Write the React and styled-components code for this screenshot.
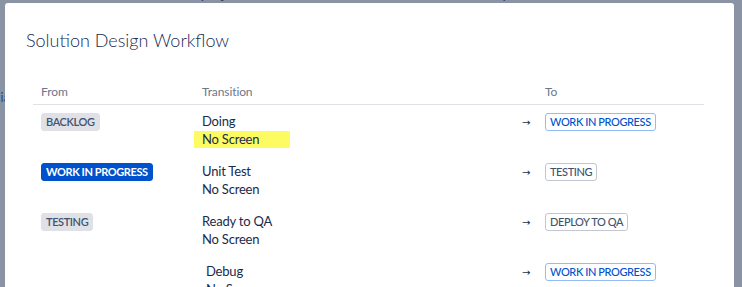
import React from "react";
import styled, { createGlobalStyle } from "styled-components";

const GlobalStyle = createGlobalStyle`
  body {
    margin: 0;
    background: #8993a4;
    font-family: Lato, "Open Sans", sans-serif;
    overflow: hidden;
  }
`;

const Backdrop = styled.div`
  position: relative;
  height: 287px;
  overflow: hidden;
`;

const BehindLine = styled.div`
  margin-top: ${({ top }) => top}px;
  margin-left: ${({ left }) => left || 0}px;
  font-size: 14px;
  line-height: 18px;
  white-space: nowrap;
  color: ${({ color }) => color || "#2c3a52"};
`;

const Modal = styled.div`
  position: absolute;
  top: 3px;
  left: 5px;
  width: 729px;
  height: 320px;
  box-sizing: border-box;
  background: #fff;
  border-radius: 3px;
  padding: 23px 30px 0 21px;
`;

const Title = styled.h2`
  margin: 0 0 30px;
  font-size: 18px;
  line-height: 28px;
  font-weight: 300;
  color: #172b4d;
`;

const Table = styled.div`
  margin-left: 7px;
  color: #172b4d;
`;

const Row = styled.div`
  display: grid;
  grid-template-columns: 161px 320px 23px 1fr;
  align-items: start;
  padding: ${({ head }) => (head ? "0 0 4px" : "7px 0")};
  border-bottom: ${({ head }) => (head ? "1px solid #dfe1e6" : "none")};
`;

const HeadCell = styled.div`
  padding: 0 8px;
  font-size: 12px;
  line-height: 16px;
  letter-spacing: -0.1px;
  color: #6b778c;
`;

const Cell = styled.div`
  padding: 0 8px;
  padding-left: ${({ indent }) => 8 + (indent || 0)}px;
  font-size: 13px;
  letter-spacing: -0.2px;
  line-height: 18px;
  color: #172b4d;
`;

const ArrowCell = styled.div`
  padding: 2px 0 0 8px;
  font-family: "DejaVu Sans", sans-serif;
  font-size: 10px;
  line-height: 18px;
  color: #172b4d;
`;

const Mark = styled.span`
  display: inline-block;
  width: 96px;
  box-sizing: border-box;
  margin-left: -8px;
  padding-left: 8px;
  background: #fcfc62;
  line-height: 17px;
  margin-top: 1px;
`;

const palettes = {
  subtle: { bg: "#dfe1e6", fg: "#42526e", border: "#dfe1e6", weight: 600 },
  bold: { bg: "#0052cc", fg: "#fff", border: "#0052cc", weight: 700 },
  outlineBlue: { bg: "#fff", fg: "#0052cc", border: "#94bbf7", weight: 500 },
  outlineGray: { bg: "#fff", fg: "#42526e", border: "#c1c7d0", weight: 500 },
};

const Lozenge = styled.span`
  display: inline-block;
  box-sizing: border-box;
  height: 18px;
  padding: 0 4px;
  border-radius: 3px;
  border: 1px solid ${({ kind }) => palettes[kind].border};
  background: ${({ kind }) => palettes[kind].bg};
  color: ${({ kind }) => palettes[kind].fg};
  font-weight: ${({ kind }) => palettes[kind].weight};
  font-size: 11px;
  letter-spacing: -0.4px;
  line-height: 16px;
  text-transform: uppercase;
  white-space: nowrap;
`;

const transitions = [
  { from: "BACKLOG", fromKind: "subtle", name: "Doing", highlight: true, to: "WORK IN PROGRESS", toKind: "outlineBlue" },
  { from: "WORK IN PROGRESS", fromKind: "bold", name: "Unit Test", to: "TESTING", toKind: "outlineGray" },
  { from: "TESTING", fromKind: "subtle", name: "Ready to QA", to: "DEPLOY TO QA", toKind: "outlineGray" },
  { from: null, name: "Debug", indent: 4, to: "WORK IN PROGRESS", toKind: "outlineBlue" },
];

const App = () => {
  return (
    <>
      <GlobalStyle />
      <Backdrop>
        <BehindLine top={-15}>
          DUCT. This workflow is used for projects created with Jira Software. Do not modify this workflow if this workflow is used
        </BehindLine>
        <BehindLine top={85} left={-7} color="#1d4f9c">
          via
        </BehindLine>
        <Modal>
          <Title>Solution Design Workflow</Title>
          <Table>
            <Row head>
              <HeadCell>From</HeadCell>
              <HeadCell>Transition</HeadCell>
              <HeadCell />
              <HeadCell>To</HeadCell>
            </Row>
            {transitions.map((t, i) => (
              <Row key={i}>
                <Cell>{t.from && <Lozenge kind={t.fromKind}>{t.from}</Lozenge>}</Cell>
                <Cell indent={t.indent}>
                  <div>{t.name}</div>
                  {t.highlight ? <Mark>No Screen</Mark> : <div>No Screen</div>}
                </Cell>
                <ArrowCell>→</ArrowCell>
                <Cell>
                  <Lozenge kind={t.toKind}>{t.to}</Lozenge>
                </Cell>
              </Row>
            ))}
          </Table>
        </Modal>
      </Backdrop>
    </>
  );
};

export default App;
